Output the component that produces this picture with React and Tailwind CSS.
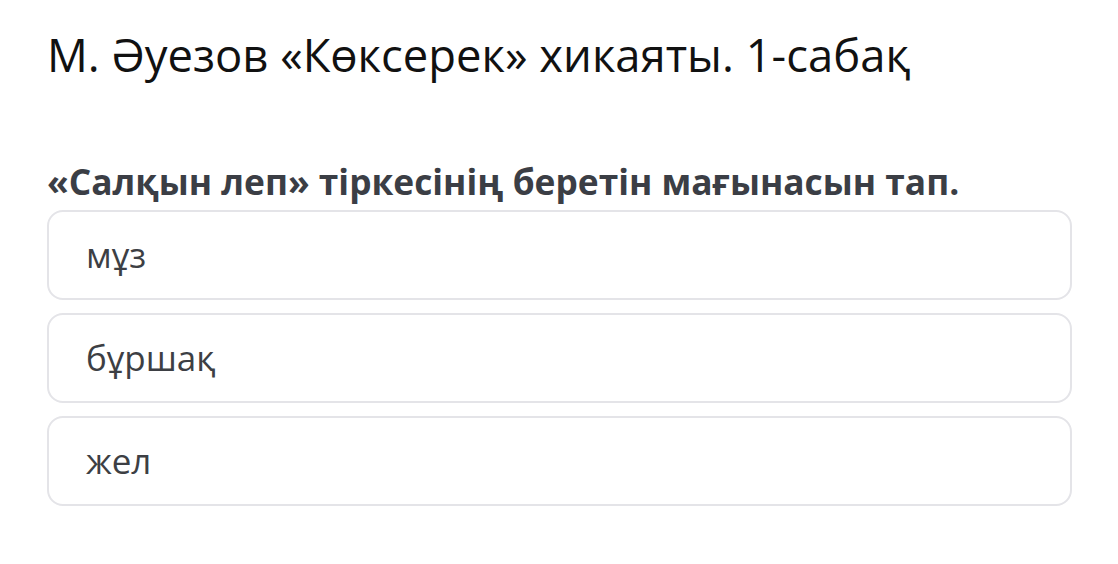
import React from "react";

const options = ["мұз", "бұршақ", "жел"];

function App() {
    return (
        <div className="min-h-screen bg-white font-['Open_Sans',sans-serif]">
            <div className="pl-[47px] pr-[46px] pt-[26px]">
                <h1 className="text-[45.4px] leading-[56px] text-[#111111]">
                    М. Әуезов «Көксерек» хикаяты. 1-сабақ
                </h1>

                <h2 className="mt-[79px] text-[35.3px] leading-[40px] font-bold text-[#3b3e45]">
                    «Салқын леп» тіркесінің беретін мағынасын тап.
                </h2>

                <div className="mt-[9px] flex flex-col gap-[13px]">
                    {options.map((opt) => (
                        <div
                            key={opt}
                            className="h-[90px] flex items-center pl-[37px] border-2 border-[#e4e4e8] rounded-[16px] bg-white"
                        >
                            <span className="text-[35px] text-[#3d3f44]">{opt}</span>
                        </div>
                    ))}
                </div>
            </div>
        </div>
    );
}

export default App;
